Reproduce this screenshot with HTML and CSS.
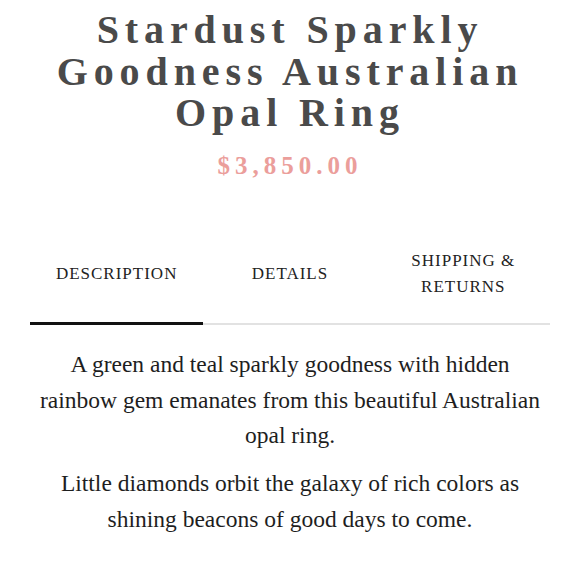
FILE: index.html
```html
<!DOCTYPE html>
<html lang="en">
<head>
<meta charset="utf-8">
<title>Stardust Sparkly Goodness Australian Opal Ring</title>
<link rel="stylesheet" href="styles.css">
</head>
<body>
<main class="product">
  <h1 class="product-title">Stardust Sparkly Goodness Australian Opal Ring</h1>
  <p class="product-price">$3,850.00</p>
  <nav class="tabs">
    <div class="tab tab-active">DESCRIPTION</div>
    <div class="tab">DETAILS</div>
    <div class="tab">SHIPPING &amp;<br>RETURNS</div>
  </nav>
  <section class="description">
    <p>A green and teal sparkly goodness with hidden rainbow gem emanates from this beautiful Australian opal ring.</p>
    <p>Little diamonds orbit the galaxy of rich colors as shining beacons of good days to come.</p>
  </section>
</main>
</body>
</html>
```
FILE: styles.css
```css
html, body {
  margin: 0;
  padding: 0;
  background: #ffffff;
}

body {
  font-family: "Liberation Serif", "Times New Roman", serif;
  color: #222222;
}

.product {
  padding: 0 30px;
}

.product-title {
  margin: 9px 0 0;
  font-size: 40px;
  line-height: 41.5px;
  font-weight: 700;
  letter-spacing: 5.9px;
  text-align: center;
  color: #4a4a4a;
}

.product-price {
  margin: 17px 0 0;
  font-size: 25px;
  line-height: 30px;
  font-weight: 700;
  letter-spacing: 5px;
  text-align: center;
  color: #eb9e9b;
}

.tabs {
  display: grid;
  grid-template-columns: 1fr 1fr 1fr;
  margin-top: 67px;
}

.tab {
  display: flex;
  align-items: center;
  justify-content: center;
  text-align: center;
  font-size: 17px;
  line-height: 26px;
  letter-spacing: 1px;
  color: #222222;
  padding-bottom: 23px;
  border-bottom: 2px solid #e2e2e2;
}

.tab-active {
  padding-bottom: 22px;
  border-bottom: 3px solid #111111;
}

.description {
  max-width: 510px;
  margin: 22.5px auto 0;
  text-align: center;
  font-size: 23.5px;
  line-height: 35.5px;
  color: #1e1e1e;
}

.description p {
  margin: 0 0 12.5px;
}
```
